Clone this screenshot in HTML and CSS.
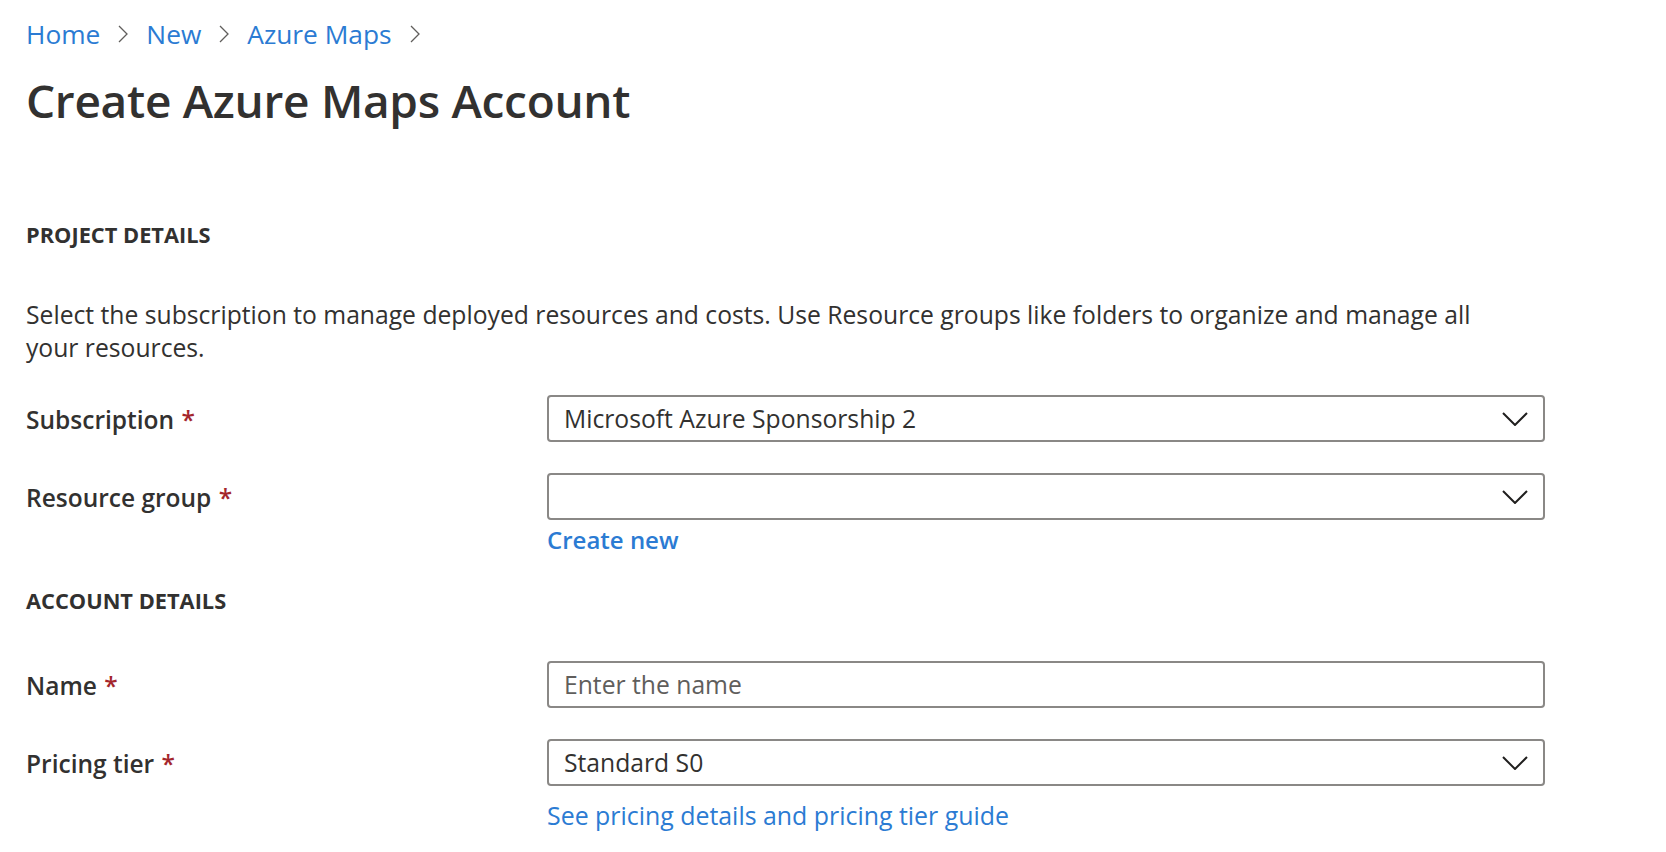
FILE: index.html
```html
<!DOCTYPE html>
<html lang="en">
<head>
<meta charset="utf-8">
<title>Create Azure Maps Account</title>
<link rel="stylesheet" href="styles.css">
</head>
<body>
<main class="page">
  <nav class="breadcrumb">
    <a class="crumb" href="#">Home</a>
    <svg class="sep" viewBox="0 0 10 18" width="10" height="18"><path d="M1 1 L9 9 L1 17" fill="none" stroke="#605e5c" stroke-width="1.3"/></svg>
    <a class="crumb" href="#">New</a>
    <svg class="sep" viewBox="0 0 10 18" width="10" height="18"><path d="M1 1 L9 9 L1 17" fill="none" stroke="#605e5c" stroke-width="1.3"/></svg>
    <a class="crumb" href="#">Azure Maps</a>
    <svg class="sep" viewBox="0 0 10 18" width="10" height="18"><path d="M1 1 L9 9 L1 17" fill="none" stroke="#605e5c" stroke-width="1.3"/></svg>
  </nav>
  <h1 class="title">Create Azure Maps Account</h1>

  <h2 class="section section-project">PROJECT DETAILS</h2>
  <p class="intro">Select the subscription to manage deployed resources and costs. Use Resource groups like folders to organize and manage all your resources.</p>

  <div class="row row-first">
    <div class="label">Subscription <span class="req">*</span></div>
    <div class="field select">
      <span class="value">Microsoft Azure Sponsorship 2</span>
      <svg class="chev" viewBox="0 0 26 14" width="26" height="14"><path d="M1 1 L13 13 L25 1" fill="none" stroke="#201f1e" stroke-width="2"/></svg>
    </div>
  </div>
  <div class="row">
    <div class="label">Resource group <span class="req">*</span></div>
    <div class="field select">
      <span class="value"></span>
      <svg class="chev" viewBox="0 0 26 14" width="26" height="14"><path d="M1 1 L13 13 L25 1" fill="none" stroke="#201f1e" stroke-width="2"/></svg>
    </div>
  </div>
  <div class="after">
    <a class="link link-bold" href="#">Create new</a>
  </div>

  <h2 class="section section-account">ACCOUNT DETAILS</h2>

  <div class="row row-name">
    <div class="label">Name <span class="req">*</span></div>
    <div class="field">
      <span class="value placeholder">Enter the name</span>
    </div>
  </div>
  <div class="row">
    <div class="label">Pricing tier <span class="req">*</span></div>
    <div class="field select">
      <span class="value">Standard S0</span>
      <svg class="chev" viewBox="0 0 26 14" width="26" height="14"><path d="M1 1 L13 13 L25 1" fill="none" stroke="#201f1e" stroke-width="2"/></svg>
    </div>
  </div>
  <div class="after after-pricing">
    <a class="link" href="#">See pricing details and pricing tier guide</a>
  </div>
</main>
</body>
</html>
```

FILE: styles.css
```css
html, body {
  margin: 0;
  padding: 0;
  background: #ffffff;
}

body {
  font-family: "Open Sans", "Noto Sans", "Liberation Sans", sans-serif;
  color: #323130;
}

.page {
  padding: 16px 0 0 26px;
  width: 1519px;
}

.breadcrumb {
  display: flex;
  align-items: center;
  height: 36px;
  gap: 13px;
}

.crumb {
  font-size: 26.3px;
  line-height: 36px;
  color: #2b7bd3;
  text-decoration: none;
}

.sep {
  display: block;
  margin: 0 5px;
}

.title {
  margin: 20px 0 0;
  font-size: 46px;
  line-height: 56px;
  font-weight: 600;
  color: #323130;
  letter-spacing: -0.3px;
}

.section {
  margin: 0;
  font-size: 21.8px;
  line-height: 28px;
  font-weight: 700;
  color: #323130;
}

.section-project {
  margin-top: 93px;
}

.section-account {
  margin-top: 29px;
}

.intro {
  margin: 49px 0 0;
  font-size: 24.7px;
  line-height: 33px;
  max-width: 1470px;
}

.row {
  display: grid;
  grid-template-columns: 521px 998px;
  align-items: center;
  margin-top: 31px;
}

.row-first {
  margin-top: 31px;
}

.row-name {
  margin-top: 46px;
}

.label {
  font-size: 24.5px;
  font-weight: 600;
  line-height: 30px;
  color: #323130;
  padding-top: 2px;
}

.req {
  color: #a4262c;
  margin-left: 1px;
}

.field {
  box-sizing: border-box;
  height: 47px;
  border: 2px solid #8a8886;
  border-radius: 4px;
  display: flex;
  align-items: center;
  padding: 0 15px 0 15px;
}

.value {
  flex: 1;
  font-size: 24.7px;
  line-height: 30px;
  color: #323130;
}

.placeholder {
  color: #605e5c;
}

.chev {
  display: block;
  flex: none;
}

.after {
  margin: 5px 0 0 521px;
  line-height: 30px;
}

.after-pricing {
  margin-top: 14px;
}

.link {
  font-size: 24.9px;
  line-height: 30px;
  color: #2b7bd3;
  text-decoration: none;
}

.link-bold {
  font-weight: 600;
  font-size: 24px;
}
```
